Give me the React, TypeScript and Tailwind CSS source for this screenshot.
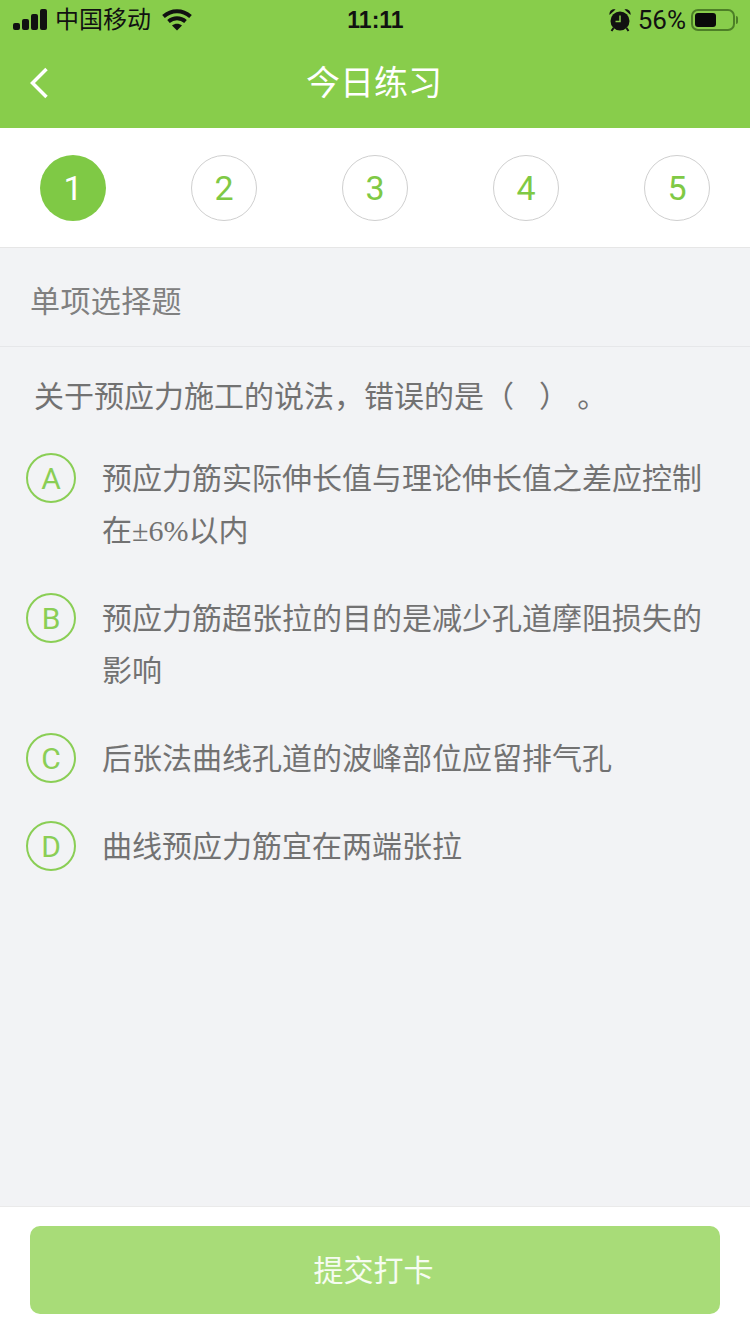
const font = { cjk: "font-['Liberation_Sans','Noto_Sans_CJK_SC',sans-serif]" };

const steps = ["1", "2", "3", "4", "5"];

const options = [
  {
    key: "A",
    text: (
      <>
        预应力筋实际伸长值与理论伸长值之差应控制在
        <span className="font-['Liberation_Serif',serif] leading-none">±6%</span>
        以内
      </>
    ),
  },
  { key: "B", text: "预应力筋超张拉的目的是减少孔道摩阻损失的影响" },
  { key: "C", text: "后张法曲线孔道的波峰部位应留排气孔" },
  { key: "D", text: "曲线预应力筋宜在两端张拉" },
];

function SignalIcon() {
  return (
    <svg width="34" height="22" viewBox="0 0 34 22" fill="#111">
      <rect x="0" y="14" width="7" height="7" rx="2" />
      <rect x="9" y="10" width="7" height="11" rx="2" />
      <rect x="18" y="5" width="7" height="16" rx="2" />
      <rect x="27" y="0" width="7" height="21" rx="2" />
    </svg>
  );
}

function WifiIcon() {
  return (
    <svg width="30" height="22" viewBox="0 0 30 22" fill="none" stroke="#111" strokeWidth="4">
      <path d="M1.500 7.500C9.500 0.500 20.500 0.500 28.500 7.500" />
      <path d="M6.500 12.500C11.500 8.300 18.500 8.300 23.500 12.500" />
      <path d="M15 21.500L10 16.500C13 14.300 17 14.300 20 16.500Z" fill="#111" stroke="none" />
    </svg>
  );
}

function AlarmIcon() {
  return (
    <svg width="22" height="24" viewBox="0 0 22 24" fill="#111">
      <circle cx="11" cy="13" r="9.500" />
      <path d="M0.500 7C0 3 3 0.500 6.500 1.500Z" />
      <path d="M21.500 7C22 3 19 0.500 15.500 1.500Z" />
      <path d="M4.500 20L2.500 23M17.500 20L19.500 23" stroke="#111" strokeWidth="2" />
      <path d="M11 7.500V13.500H6.500" fill="none" stroke="#88cd4b" strokeWidth="1.500" />
    </svg>
  );
}

function Battery() {
  return (
    <div className="flex items-center">
      <div className="w-[44px] h-[22px] rounded-[7px] border-2 border-[#4d7f27] p-[2px]">
        <div className="w-[21px] h-full rounded-[3px] bg-[#0a0a0a]" />
      </div>
      <div className="w-[2px] h-[8px] ml-[1px] rounded-r-sm bg-[#4d7f27]" />
    </div>
  );
}

export default function App() {
  return (
    <div className={`${font.cjk} w-[750px] h-[1334px] flex flex-col bg-[#f2f3f5] overflow-hidden`}>
      <div className="bg-[#88cd4b] h-[128px] shrink-0 flex flex-col">
        <div className="h-[40px] flex items-center justify-between pl-[13px] pr-[12px] text-[#111]">
          <div className="flex items-center w-[300px]">
            <SignalIcon />
            <span className="text-[24px] ml-[8px] leading-none">中国移动</span>
            <span className="ml-[11px]"><WifiIcon /></span>
          </div>
          <span className="text-[23px] font-bold leading-none">11:11</span>
          <div className="flex items-center justify-end w-[300px]">
            <AlarmIcon />
            <span className="text-[26px] ml-[7px] mr-[5px] leading-none font-['Roboto',sans-serif]">56%</span>
            <Battery />
          </div>
        </div>
        <div className="relative flex-1 flex items-center justify-center">
          <svg className="absolute left-[28px] top-[26px]" width="24" height="34" viewBox="0 0 24 34" fill="none" stroke="#fff" strokeWidth="3.500">
            <path d="M18.500 3L4.500 17L18.500 31" />
          </svg>
          <span className="text-[34px] text-white leading-none pb-[2px] pr-[2px]">今日练习</span>
        </div>
      </div>

      <div className="bg-white h-[120px] shrink-0 border-b border-[#e6e6e6] flex items-start justify-between px-[40px] pt-[27px]">
        {steps.map((s, i) =>
          i === 0 ? (
            <div key={s} className="w-[66px] h-[66px] rounded-full bg-[#7fc945] text-white flex items-center justify-center text-[34px] font-['Roboto',sans-serif]">
              {s}
            </div>
          ) : (
            <div key={s} className="w-[66px] h-[66px] rounded-full border border-[#cfcfcf] text-[#7fc945] flex items-center justify-center text-[34px] font-['Roboto',sans-serif]">
              {s}
            </div>
          )
        )}
      </div>

      <div className="h-[99px] shrink-0 border-b border-[#e6e7e9] flex items-center px-[30px] text-[30px] tracking-[0.4px] text-[#808080] pt-[8px]">
        单项选择题
      </div>

      <div className="flex-1 px-[34px] pt-[24px]">
        <div className="text-[30px] leading-[52px] text-[#727272]">关于预应力施工的说法，错误的是（&nbsp;&nbsp;&nbsp;）&nbsp;。</div>
        <div className="flex flex-col gap-[36px] mt-[30px] -ml-[8px]">
          {options.map((o) => (
            <div key={o.key} className="flex items-start">
              <div className="w-[50px] h-[50px] shrink-0 rounded-full border-2 border-[#8ace55] text-[#8ace55] flex items-center justify-center text-[30px] font-['Roboto',sans-serif]">
                {o.key}
              </div>
              <div className="ml-[26px] w-[610px] text-[30px] leading-[52px] text-[#727272]">{o.text}</div>
            </div>
          ))}
        </div>
      </div>

      <div className="h-[128px] shrink-0 bg-white border-t border-[#eaeaea] px-[30px] pt-[19px]">
        <div className="h-[88px] rounded-[10px] bg-[#a8dc78] text-white/90 text-[30px] pr-[3px] flex items-center justify-center">
          提交打卡
        </div>
      </div>
    </div>
  );
}
